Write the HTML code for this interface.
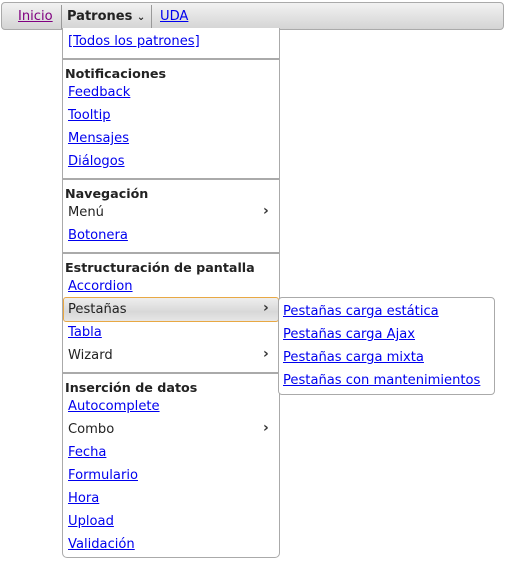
<!DOCTYPE html><html><head><style>
body{margin:0;width:515px;height:563px;background:#fff;position:relative;font-family:"DejaVu Sans","Liberation Sans",sans-serif;font-size:13.1px;overflow:hidden}
.bar{position:absolute;left:1px;top:2px;width:503px;height:28px;border:1px solid #aaa;border-radius:4px;background:linear-gradient(#f2f2f2,#d4d4d4);box-sizing:border-box}
.t{position:absolute;white-space:nowrap;line-height:16px;color:#222}
a{color:#00e;text-decoration:underline}
.b{font-weight:bold;font-size:12.7px}
.menu{position:absolute;left:62px;top:28px;width:218px;height:530px;border:1px solid #aaa;border-top:none;border-radius:0 0 5px 5px;box-sizing:border-box;background:#fff}
.sep{position:absolute;left:63px;width:216px;height:2px;background:#aaa}
.hl{position:absolute;left:63px;top:297px;width:216px;height:25px;border:1px solid #e8a844;border-radius:3px;box-sizing:border-box;background:linear-gradient(#eee,#d8d8d8 60%,#e6e6e6)}
.sub{position:absolute;left:278px;top:297px;width:217px;height:98px;border:1px solid #aaa;border-radius:4px;box-sizing:border-box;background:#fff}
.ar{position:absolute;left:263px;font-size:14px;font-weight:bold;line-height:16px;color:#333}
</style></head><body>
<div class="bar"></div>
<div class="t" style="left:18px;top:9px"><a style="color:#800080">Inicio</a></div>
<div style="position:absolute;left:61px;top:5px;width:1px;height:24px;background:#999"></div>
<div class="t b" style="left:67px;top:9px;font-size:13px">Patrones <span style="font-size:10px">⌄</span></div>
<div style="position:absolute;left:151px;top:5px;width:1px;height:24px;background:#999"></div>
<div class="t" style="left:160px;top:9px"><a>UDA</a></div>
<div class="menu"></div>
<div class="sep" style="top:58px"></div>
<div class="sep" style="top:178px"></div>
<div class="sep" style="top:252px"></div>
<div class="sep" style="top:372px"></div>
<div class="hl"></div>
<div class="sub"></div>
<div class="t" style="left:68px;top:34px"><a>[Todos los patrones]</a></div>
<div class="t b" style="left:65px;top:66px">Notificaciones</div>
<div class="t" style="left:68px;top:85px"><a>Feedback</a></div>
<div class="t" style="left:68px;top:108px"><a>Tooltip</a></div>
<div class="t" style="left:68px;top:131px"><a>Mensajes</a></div>
<div class="t" style="left:68px;top:154px"><a>Diálogos</a></div>
<div class="t b" style="left:65px;top:186px">Navegación</div>
<div class="t" style="left:68px;top:205px">Menú</div><div class="ar" style="top:203px">›</div>
<div class="t" style="left:68px;top:228px"><a>Botonera</a></div>
<div class="t b" style="left:65px;top:260px">Estructuración de pantalla</div>
<div class="t" style="left:68px;top:279px"><a>Accordion</a></div>
<div class="t" style="left:68px;top:302px">Pestañas</div><div class="ar" style="top:300px">›</div>
<div class="t" style="left:68px;top:325px"><a>Tabla</a></div>
<div class="t" style="left:68px;top:348px">Wizard</div><div class="ar" style="top:346px">›</div>
<div class="t b" style="left:65px;top:380px">Inserción de datos</div>
<div class="t" style="left:68px;top:399px"><a>Autocomplete</a></div>
<div class="t" style="left:68px;top:422px">Combo</div><div class="ar" style="top:420px">›</div>
<div class="t" style="left:68px;top:445px"><a>Fecha</a></div>
<div class="t" style="left:68px;top:468px"><a>Formulario</a></div>
<div class="t" style="left:68px;top:491px"><a>Hora</a></div>
<div class="t" style="left:68px;top:514px"><a>Upload</a></div>
<div class="t" style="left:68px;top:537px"><a>Validación</a></div>
<div class="t" style="left:283px;top:304px"><a>Pestañas carga estática</a></div>
<div class="t" style="left:283px;top:327px"><a>Pestañas carga Ajax</a></div>
<div class="t" style="left:283px;top:350px"><a>Pestañas carga mixta</a></div>
<div class="t" style="left:283px;top:373px"><a>Pestañas con mantenimientos</a></div>
</body></html>
